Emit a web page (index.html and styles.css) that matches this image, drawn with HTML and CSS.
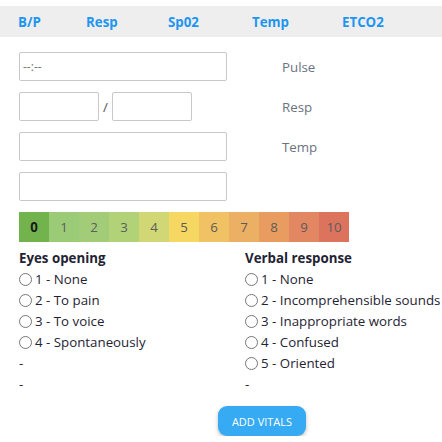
FILE: index.html
```html
<!DOCTYPE html>
<html>
<head>
<meta charset="utf-8">
<link rel="stylesheet" href="styles.css">
</head>
<body>
<nav class="tabs">
  <span class="tab t1">B/P</span>
  <span class="tab t2">Resp</span>
  <span class="tab t3">Sp02</span>
  <span class="tab t4">Temp</span>
  <span class="tab">ETCO2</span>
</nav>
<form class="vitals">
  <div class="row">
    <input class="field wide" type="text" placeholder="--:--">
    <span class="label">Pulse</span>
  </div>
  <div class="row">
    <div class="pair">
      <input class="field short" type="text">
      <span class="slash">/</span>
      <input class="field short" type="text">
    </div>
    <span class="label">Resp</span>
  </div>
  <div class="row">
    <input class="field wide" type="text">
    <span class="label">Temp</span>
  </div>
  <div class="row">
    <input class="field wide" type="text">
  </div>
  <div class="scale">
    <span class="cell c0 active">0</span>
    <span class="cell c1">1</span>
    <span class="cell c2">2</span>
    <span class="cell c3">3</span>
    <span class="cell c4">4</span>
    <span class="cell c5">5</span>
    <span class="cell c6">6</span>
    <span class="cell c7">7</span>
    <span class="cell c8">8</span>
    <span class="cell c9">9</span>
    <span class="cell c10">10</span>
  </div>
  <div class="gcs">
    <div class="col">
      <div class="head">Eyes opening</div>
      <label class="opt"><input type="radio" name="eyes"><span>1 - None</span></label>
      <label class="opt"><input type="radio" name="eyes"><span>2 - To pain</span></label>
      <label class="opt"><input type="radio" name="eyes"><span>3 - To voice</span></label>
      <label class="opt"><input type="radio" name="eyes"><span>4 - Spontaneously</span></label>
      <div class="opt">-</div>
      <div class="opt">-</div>
    </div>
    <div class="col">
      <div class="head">Verbal response</div>
      <label class="opt"><input type="radio" name="verbal"><span>1 - None</span></label>
      <label class="opt"><input type="radio" name="verbal"><span>2 - Incomprehensible sounds</span></label>
      <label class="opt"><input type="radio" name="verbal"><span>3 - Inappropriate words</span></label>
      <label class="opt"><input type="radio" name="verbal"><span>4 - Confused</span></label>
      <label class="opt"><input type="radio" name="verbal"><span>5 - Oriented</span></label>
      <div class="opt">-</div>
    </div>
  </div>
  <button class="add" type="button">ADD VITALS</button>
</form>
</body>
</html>
```
FILE: styles.css
```css
* { box-sizing: border-box; }
body {
  margin: 0;
  background: #fff;
  font-family: "Open Sans", "Noto Sans", sans-serif;
  font-size: 13.3px;
  color: #1f2333;
}
.tabs {
  margin-top: 6px;
  height: 31px;
  background: #eeeeee;
  display: flex;
  align-items: center;
  padding-left: 18px;
}
.tab {
  font-weight: 700;
  color: #1e96f0;
  font-size: 13.3px;
}
.t1 { width: 68px; }
.t2 { width: 82px; }
.t3 { width: 84px; }
.t4 { width: 90px; }
.vitals {
  padding: 15px 0 0 19px;
  display: flex;
  flex-direction: column;
}
.row {
  display: flex;
  align-items: center;
  height: 29px;
  margin-bottom: 11px;
}
.field {
  height: 29px;
  border: 1px solid #c8c8c8;
  border-radius: 2px;
  font: inherit;
  font-size: 12px;
  padding: 0 3px;
  color: #333;
}
.field::placeholder { color: #777; }
.wide { width: 208px; }
.pair { display: flex; align-items: center; width: 208px; }
.short { width: 80px; }
.slash { width: 13px; text-align: center; color: #555; }
.label {
  margin-left: 55px;
  color: #6b7280;
  font-size: 13.3px;
}
.scale {
  display: flex;
  width: 330px;
  height: 30px;
}
.cell {
  width: 30px;
  display: flex;
  align-items: center;
  justify-content: center;
  color: #5c5c5c;
  font-size: 13.3px;
}
.cell.active { color: #1a1a1a; font-weight: 700; }
.c0 { background: #72b34e; }
.c1 { background: #9ccb78; }
.c2 { background: #a3cc79; }
.c3 { background: #b2d278; }
.c4 { background: #d2d775; }
.c5 { background: #f5d762; }
.c6 { background: #f0c263; }
.c7 { background: #ebb064; }
.c8 { background: #e89c5f; }
.c9 { background: #e28762; }
.c10 { background: #dc745d; }
.gcs {
  display: grid;
  grid-template-columns: 226px 1fr;
  margin-top: 6px;
}
.head { font-weight: 700; line-height: 21px; }
.opt {
  display: flex;
  align-items: center;
  line-height: 21px;
  height: 21px;
  white-space: nowrap;
}
.opt input {
  appearance: none;
  -webkit-appearance: none;
  width: 13px;
  height: 13px;
  margin: 0 3px 0 0;
  border: 1px solid #767676;
  border-radius: 50%;
  background: #fff;
}
.add {
  align-self: flex-start;
  margin: 11px 0 0 199px;
  width: 88px;
  height: 30px;
  border: none;
  border-radius: 9px;
  background: #36aaf3;
  color: #fff;
  font-family: inherit;
  font-size: 11px;
  box-shadow: 0 2px 4px rgba(0,0,0,0.25);
}
```
